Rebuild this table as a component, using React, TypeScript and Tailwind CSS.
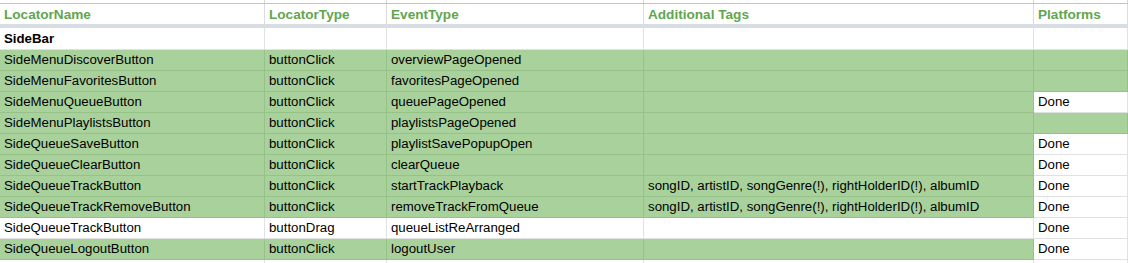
type Row = {
  cells: string[];
  green: boolean[];
  bold?: boolean;
};

const G = true;
const W = false;

const TAGS = "songID, artistID, songGenre(!), rightHolderID(!), albumID";

const rows: Row[] = [
  { cells: ["SideBar", "", "", "", ""], green: [W, W, W, W, W], bold: true },
  { cells: ["SideMenuDiscoverButton", "buttonClick", "overviewPageOpened", "", ""], green: [G, G, G, G, G] },
  { cells: ["SideMenuFavoritesButton", "buttonClick", "favoritesPageOpened", "", ""], green: [G, G, G, G, G] },
  { cells: ["SideMenuQueueButton", "buttonClick", "queuePageOpened", "", "Done"], green: [G, G, G, G, W] },
  { cells: ["SideMenuPlaylistsButton", "buttonClick", "playlistsPageOpened", "", ""], green: [G, G, G, G, G] },
  { cells: ["SideQueueSaveButton", "buttonClick", "playlistSavePopupOpen", "", "Done"], green: [G, G, G, G, W] },
  { cells: ["SideQueueClearButton", "buttonClick", "clearQueue", "", "Done"], green: [G, G, G, G, W] },
  { cells: ["SideQueueTrackButton", "buttonClick", "startTrackPlayback", TAGS, "Done"], green: [G, G, G, G, W] },
  { cells: ["SideQueueTrackRemoveButton", "buttonClick", "removeTrackFromQueue", TAGS, "Done"], green: [G, G, G, G, W] },
  { cells: ["SideQueueTrackButton", "buttonDrag", "queueListReArranged", "", "Done"], green: [W, W, W, W, W] },
  { cells: ["SideQueueLogoutButton", "buttonClick", "logoutUser", "", "Done"], green: [G, G, G, G, W] },
];

const HEADERS = ["LocatorName", "LocatorType", "EventType", "Additional Tags", "Platforms"];

const GRID = "grid grid-cols-[265px_122px_257px_390px_1fr]";

export default function App() {
  return (
    <div className="w-[1128px] h-[263px] overflow-hidden bg-white text-[13.25px] leading-[20px] text-black font-['Liberation_Sans',Arial,Helvetica,sans-serif]">
      {/* partial row above header */}
      <div className={`${GRID} border-b border-[#c4c4c4]`}>
        {HEADERS.map((h) => (
          <div key={h} className="h-[3px] border-r border-[#d6d6d6]" />
        ))}
      </div>

      {/* Header row */}
      <div className={`${GRID} border-b-4 border-[#d8dce3]`}>
        {HEADERS.map((h) => (
          <div key={h} className="h-[20px] pt-[1px] px-[4px] border-r border-[#dcdcdc] text-[13.6px] font-bold text-[#62a54e] whitespace-nowrap overflow-hidden">
            {h}
          </div>
        ))}
      </div>

      {/* Data rows */}
      {rows.map((row, i) => (
        <div key={i} className={GRID}>
          {row.cells.map((c, j) => {
            const green = row.green[j];
            return (
              <div
                key={j}
                className={`${i === 0 ? "h-[22px] pt-[1px]" : "h-[21px]"} px-[4px] border-r border-b whitespace-nowrap overflow-hidden ${
                  green ? "bg-[#a9d19c] border-[#96c289]" : "bg-white border-[#e1e1e1]"
                } ${row.bold ? "font-bold" : ""}`}
              >
                {c}
              </div>
            );
          })}
        </div>
      ))}

      {/* partial row below */}
      <div className={GRID}>
        {HEADERS.map((h) => (
          <div key={h} className="h-[6px] border-r border-[#e1e1e1]" />
        ))}
      </div>
    </div>
  );
}
